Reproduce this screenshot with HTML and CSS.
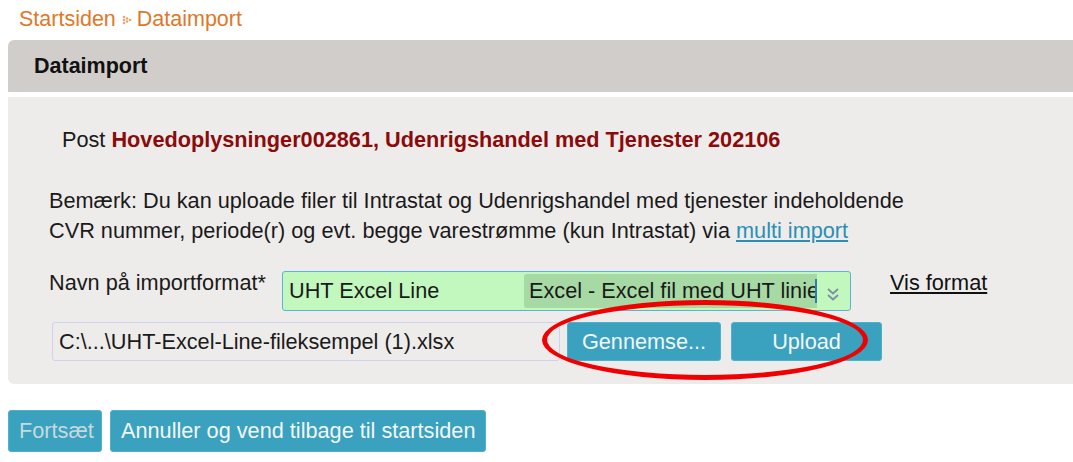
FILE: index.html
```html
<!DOCTYPE html>
<html lang="da">
<head>
<meta charset="utf-8">
<title>Dataimport</title>
<link rel="stylesheet" href="styles.css">
</head>
<body>
<nav class="breadcrumb">
  <a href="#" class="crumb">Startsiden</a>
  <svg class="sep" width="10" height="10" viewBox="0 0 10 10"><circle cx="2" cy="2" r="1.3" fill="#e9a66a"/><circle cx="2" cy="5" r="1.3" fill="#e9a66a"/><circle cx="2" cy="8" r="1.3" fill="#e9a66a"/><circle cx="5" cy="3.5" r="1.3" fill="#e9a66a"/><circle cx="5" cy="6.5" r="1.3" fill="#e9a66a"/><circle cx="8" cy="5" r="1.3" fill="#e9a66a"/></svg>
  <span class="crumb">Dataimport</span>
</nav>
<div class="header">Dataimport</div>
<div class="panel">
  <p class="post">Post <strong>Hovedoplysninger002861, Udenrigshandel med Tjenester 202106</strong></p>
  <p class="note">Bemærk: Du kan uploade filer til Intrastat og Udenrigshandel med tjenester indeholdende<br>CVR nummer, periode(r) og evt. begge varestrømme (kun Intrastat) via <a href="#" class="link">multi import</a></p>
  <div class="format-row">
    <span class="label">Navn på importformat*</span>
    <div class="select">
      <span class="sel-name">UHT Excel Line</span>
      <span class="sel-desc">Excel - Excel fil med UHT linie</span>
      <span class="caret"></span>
      <svg class="chev" width="14" height="18" viewBox="0 0 14 18"><path d="M2 4 L7 8.5 L12 4 M2 10 L7 14.5 L12 10" fill="none" stroke="#7a8fa6" stroke-width="1.8"/></svg>
    </div>
    <a href="#" class="vis">Vis format</a>
  </div>
  <div class="file-row">
    <div class="file">C:\...\UHT-Excel-Line-fileksempel (1).xlsx</div>
    <button class="btn browse">Gennemse...</button>
    <button class="btn upload">Upload</button>
    <div class="ring"></div>
  </div>
</div>
<div class="actions">
  <button class="btn act disabled">Fortsæt</button>
  <button class="btn act">Annuller og vend tilbage til startsiden</button>
</div>
</body>
</html>
```

FILE: styles.css
```css
html, body {
  margin: 0;
  padding: 0;
  background: #ffffff;
}
body {
  padding-left: 8px;
  font-family: Arial, "Liberation Sans", sans-serif;
  font-size: 21.7px;
  color: #1a1a1a;
  overflow: hidden;
}
.breadcrumb {
  height: 40px;
  padding-left: 11px;
  display: flex;
  align-items: center;
  gap: 4px;
  box-sizing: border-box;
  padding-bottom: 2px;
}
.crumb {
  color: #e0782a;
  text-decoration: none;
  font-size: 21.5px;
}
.sep { margin: 2px 1px 0 2px; }
.header {
  height: 52px;
  background: #d0cdca;
  border-radius: 6px 0 0 0;
  display: flex;
  align-items: center;
  padding-left: 26px;
  font-weight: bold;
  font-size: 21.5px;
  color: #111;
}
.panel {
  margin-top: 5px;
  height: 287px;
  box-sizing: border-box;
  background: #eeecea;
  border-radius: 0 0 0 6px;
  padding: 29px 0 0 41px;
}
.post {
  margin: 0 0 0 13px;
  line-height: 28px;
}
.post strong { color: #8b0a0a; }
.note {
  margin: 32px 0 0 0;
  line-height: 30px;
}
.link { color: #2a8fb5; }
.format-row {
  display: flex;
  align-items: flex-start;
  margin-top: 25px;
  height: 40px;
}
.label {
  width: 233px;
  line-height: 26px;
  margin-top: -1px;
}
.select {
  width: 569px;
  height: 40px;
  box-sizing: border-box;
  border: 1.5px solid #5ab4d2;
  border-radius: 3px;
  background: #c2f8be;
  display: flex;
  align-items: center;
  position: relative;
}
.sel-name {
  width: 241px;
  padding-left: 6px;
  box-sizing: border-box;
  color: #1a1a1a;
}
.sel-desc {
  width: 293px;
  height: 34px;
  background: #a6d9a3;
  border-radius: 3px 0 0 3px;
  display: flex;
  align-items: center;
  padding-left: 5px;
  box-sizing: border-box;
  white-space: nowrap;
  overflow: hidden;
  color: #1a1a1a;
}
.caret {
  width: 2px;
  height: 24px;
  background: #2a7fb0;
  margin-left: -2px;
}
.chev { margin-left: 9px; margin-top: 5px; }
.vis {
  margin-left: 39px;
  color: #111;
  line-height: 26px;
  margin-top: -1px;
}
.file-row {
  display: flex;
  align-items: center;
  margin-top: 11px;
  margin-left: 3px;
  position: relative;
}
.file {
  width: 508px;
  height: 39px;
  box-sizing: border-box;
  border: 1px solid #cfd0f2;
  border-radius: 3px;
  display: flex;
  align-items: center;
  padding-left: 6px;
  color: #1a1a1a;
}
.btn {
  font-family: Arial, "Liberation Sans", sans-serif;
  font-size: 21.7px;
  color: #f2f7f9;
  background: #3aa1be;
  border: 1px solid #4fb0cb;
  border-radius: 3px;
  cursor: pointer;
  padding: 0;
}
.browse {
  width: 154px;
  height: 39px;
  margin-left: 7px;
}
.upload {
  width: 151px;
  height: 39px;
  margin-left: 10px;
}
.ring {
  position: absolute;
  left: 490px;
  top: -22px;
  width: 316px;
  height: 70px;
  border: 5px solid #f00000;
  border-radius: 50%;
  pointer-events: none;
}
.actions {
  display: flex;
  gap: 8px;
  margin-top: 26px;
}
.act {
  height: 42px;
  padding: 0 10px;
}
.act.disabled {
  color: #c6d9de;
  width: 94px;
}
```
